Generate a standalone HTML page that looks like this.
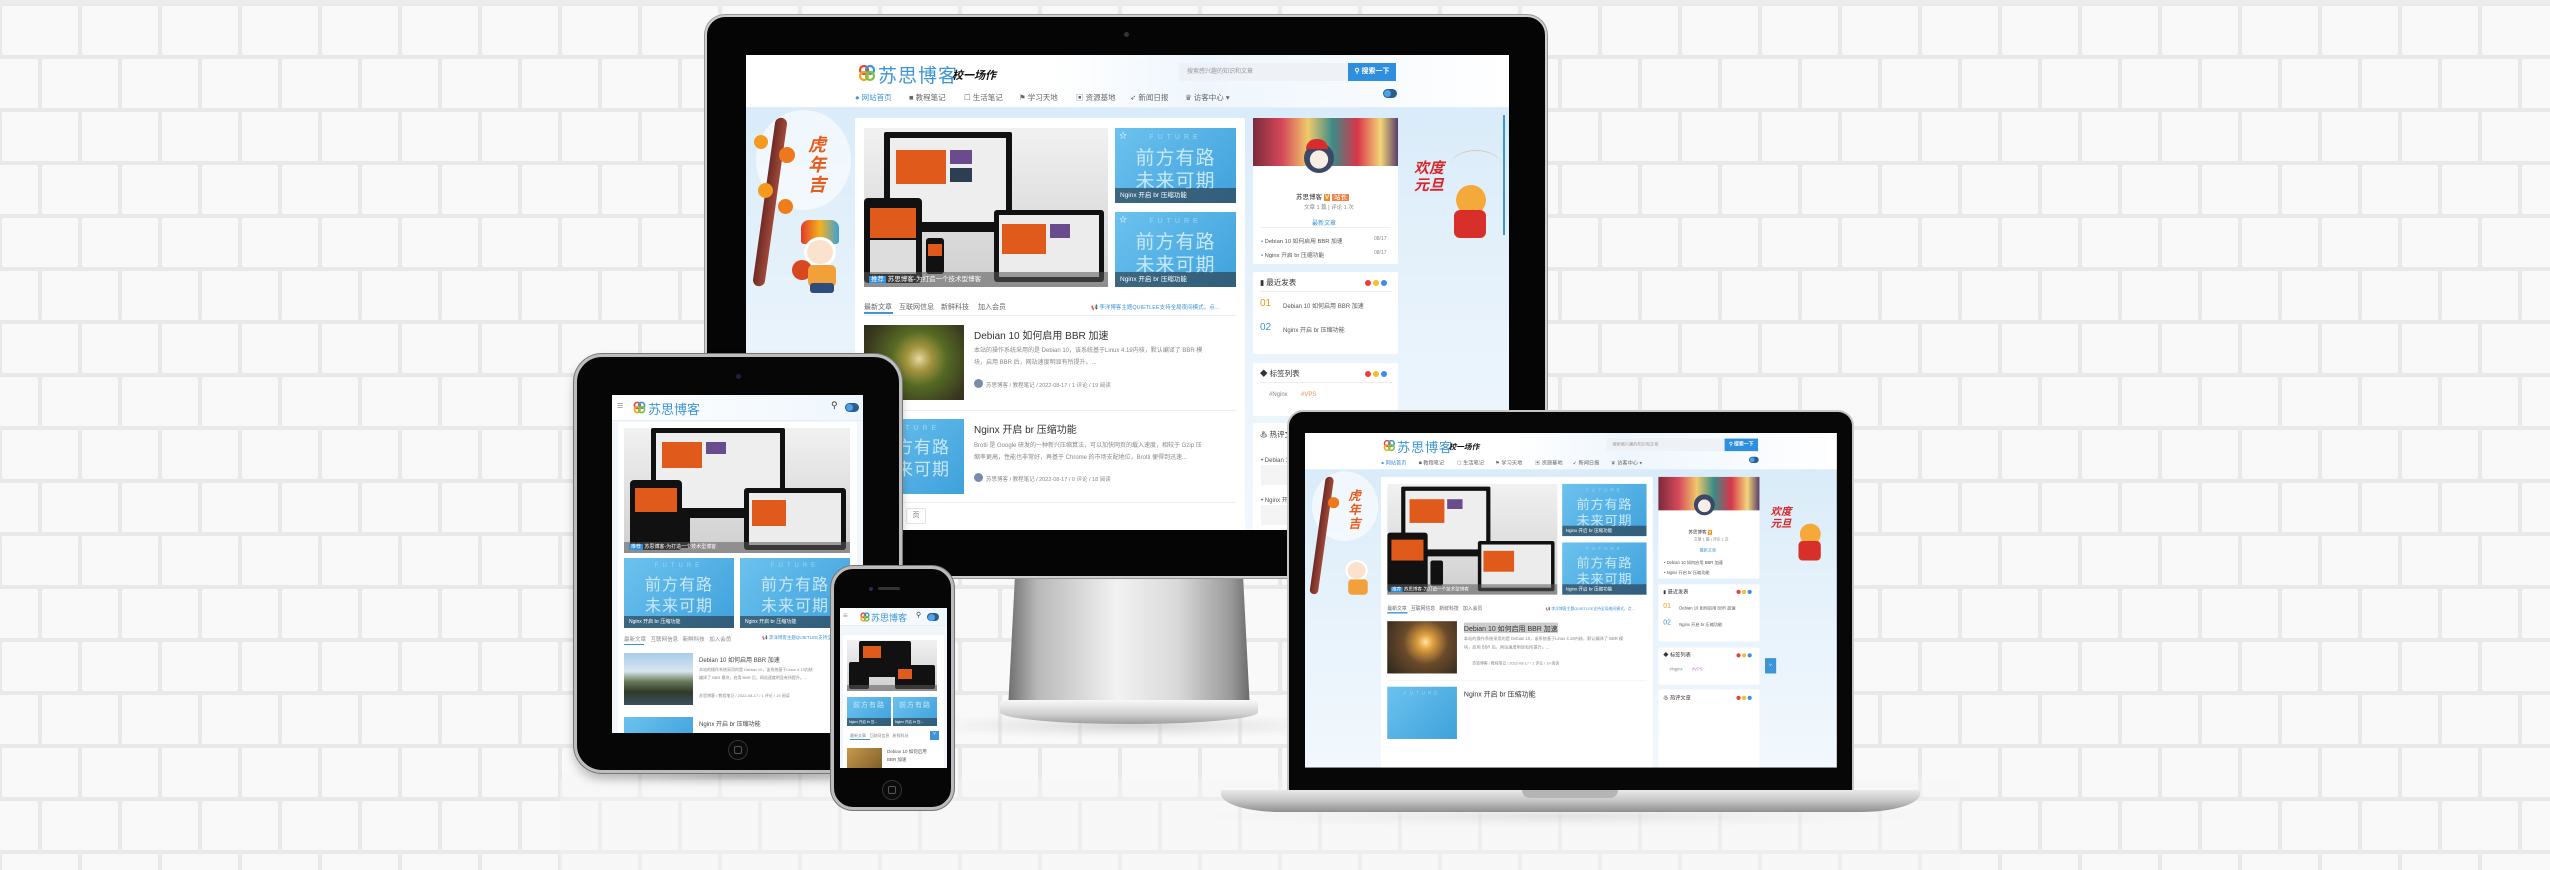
<!DOCTYPE html>
<html><head><meta charset="utf-8">
<style>
*{margin:0;padding:0;box-sizing:border-box}
body{width:2550px;height:870px;overflow:hidden;background:#ececec;font-family:"Liberation Sans","Noto Sans CJK SC",sans-serif;position:relative}
.abs{position:absolute}
.site{position:absolute;left:0;top:0;width:763px;height:480px;overflow:hidden;background:linear-gradient(180deg,#d6eaf8 0%,#e6f2fb 50%,#f2f8fd 100%)}
.site *{position:absolute;white-space:nowrap}
.hdr{left:0;top:0;width:763px;height:53px;background:linear-gradient(90deg,#fff 0%,#fff 40%,#eef6fd 60%,#fff 100%);border-bottom:1px solid #e3eef8}
.lt{font-size:19px;color:#3d95d6;letter-spacing:1px}
.sl{font-size:11px;color:#111;font-weight:bold;font-style:italic}
.srch{background:#eef2f6;color:#999;font-size:6px;line-height:18px;padding-left:8px}
.sbtn{background:#2e8fde;color:#fff;font-size:7px;line-height:18px;text-align:center;font-weight:bold}
.nv{font-size:7.5px;color:#666;top:37px}
.tog{width:14px;height:9px;border-radius:5px;background:#2d5d8e}
.tog::after{content:"";position:absolute;left:1px;top:1px;width:7px;height:7px;border-radius:50%;background:#4fa2e8}
.card{background:#fff;border-radius:2px}
.slide{background:linear-gradient(180deg,#f1f1f1,#cfcfcf);overflow:hidden}
.blue{background:linear-gradient(135deg,#6cc2ee,#3fa1dc);overflow:hidden}
.blue .f{left:0;right:0;top:6px;text-align:center;color:#9fd6f4;font-size:7px;letter-spacing:4px}
.blue .c{left:0;right:0;text-align:center;color:#c8e8fa;font-size:19px;letter-spacing:1px}
.cap{left:0;right:0;bottom:0;height:15px;background:rgba(40,50,60,.6);color:#fff;font-size:6.5px;line-height:15px;padding-left:5px}
.gt{color:#888;font-size:6px}
.tt{color:#333;font-size:10px}
.dots{width:24px;height:6px}
.dots i{position:absolute;top:0;width:6px;height:6px;border-radius:50%}
.mon{background:#111;border-radius:2px}
.org{background:#e05a1c}
</style></head><body>

<!-- brick background -->
<svg class="abs" style="left:0;top:0" width="2550" height="870">
<defs><pattern id="br" width="80" height="106" patternUnits="userSpaceOnUse">
<rect width="80" height="106" fill="#e9e9e9"/>
<rect x="2" y="2" width="76" height="49" rx="2" fill="#f9f9f9"/>
<rect x="-38" y="55" width="76" height="49" rx="2" fill="#f9f9f9"/>
<rect x="42" y="55" width="76" height="49" rx="2" fill="#f9f9f9"/>
</pattern>
<radialGradient id="sh"><stop offset="0" stop-color="#bbb" stop-opacity=".6"/><stop offset="1" stop-color="#ddd" stop-opacity="0"/></radialGradient>
</defs>
<rect width="2550" height="870" fill="url(#br)" transform="translate(0,4)"/>
<ellipse cx="1130" cy="726" rx="230" ry="14" fill="url(#sh)"/>
<ellipse cx="1560" cy="816" rx="360" ry="12" fill="url(#sh)"/>
<ellipse cx="740" cy="776" rx="190" ry="12" fill="url(#sh)"/>
<rect x="560" y="780" width="1400" height="90" fill="#f4f4f4" opacity=".45"/>
</svg>

<!-- iMac stand -->
<div class="abs" style="left:1008px;top:570px;width:242px;height:140px;background:linear-gradient(90deg,#6f6f6f 0%,#b8b8b8 12%,#f2f2f2 45%,#d9d9d9 70%,#9a9a9a 92%,#6a6a6a 100%);clip-path:polygon(3% 0,97% 0,100% 100%,0 100%)"></div>
<div class="abs" style="left:1000px;top:700px;width:258px;height:24px;border-radius:4px 4px 50% 50%;background:linear-gradient(180deg,#f8f8f8,#cfcfcf 60%,#9f9f9f)"></div>

<!-- iMac body -->
<div class="abs" style="left:705px;top:15px;width:842px;height:563px;background:#050505;border-radius:20px 20px 4px 4px;border:2px solid #cfcfcf;box-shadow:0 0 0 1px #999"></div>
<div class="abs" style="left:1124px;top:32px;width:5px;height:5px;border-radius:50%;background:#333"></div>

<!-- iMac screen -->
<div class="abs" style="left:746px;top:55px;width:763px;height:475px;overflow:hidden">
<div class="site">
 <div class="hdr">
  <svg style="left:112px;top:9px" width="18" height="18" viewBox="0 0 18 18" fill="none" stroke-width="2.2"><circle cx="6" cy="6" r="4" stroke="#e7473c"/><circle cx="12" cy="6" r="4" stroke="#3d95d6"/><circle cx="6" cy="12" r="4" stroke="#f2a51a"/><circle cx="12" cy="12" r="4" stroke="#7cc242"/></svg>
  <span class="lt" style="left:132px;top:6px">苏思博客</span>
  <span class="sl" style="left:206px;top:12px">校一场作</span>
  <div class="srch" style="left:433px;top:8px;width:169px;height:18px">搜索感兴趣的知识和文章</div>
  <div class="sbtn" style="left:602px;top:8px;width:48px;height:18px">⚲ 搜索一下</div>
  <span class="nv" style="left:109px;color:#3d95d6">● 网站首页</span>
  <span class="nv" style="left:163px">■ 教程笔记</span>
  <span class="nv" style="left:218px">☐ 生活笔记</span>
  <span class="nv" style="left:273px">⚑ 学习天地</span>
  <span class="nv" style="left:330px">▣ 资源基地</span>
  <span class="nv" style="left:384px">➶ 新闻日报</span>
  <span class="nv" style="left:439px">♛ 访客中心 ▾</span>
  <div class="tog" style="left:637px;top:34px"></div>
 </div>
 <!-- left deco -->
 <div style="left:10px;top:55px;width:95px;height:100px;border-radius:50%;background:#fff;opacity:.6"></div>
 <div style="left:18px;top:62px;width:12px;height:170px;background:linear-gradient(90deg,#6e2a24,#a04a3a);transform:rotate(8deg);border-radius:6px"></div>
 <div style="left:8px;top:80px;width:14px;height:14px;border-radius:50%;background:#f59a1f"></div>
 <div style="left:33px;top:92px;width:16px;height:16px;border-radius:50%;background:#f0781c"></div>
 <div style="left:12px;top:128px;width:15px;height:15px;border-radius:50%;background:#f59a1f"></div>
 <div style="left:32px;top:144px;width:15px;height:15px;border-radius:50%;background:#ef7d1a"></div>
 <div style="left:62px;top:20px;width:30px;font-size:18px;line-height:20px;color:#e85d1c;white-space:normal;top:80px;font-weight:bold;font-style:italic">虎年吉</div>
 <div style="left:55px;top:165px;width:38px;height:24px;border-radius:8px 8px 3px 3px;background:linear-gradient(90deg,#e23a2a,#f3b31e,#3aa0d8)"></div>
 <div style="left:58px;top:182px;width:32px;height:30px;border-radius:50%;background:#fbe2cf;border:3px solid #fff"></div>
 <div style="left:46px;top:205px;width:20px;height:20px;border-radius:50%;background:#d8471d"></div>
 <div style="left:62px;top:210px;width:28px;height:22px;background:#f2a03a;border-radius:5px"></div>
 <div style="left:64px;top:228px;width:24px;height:10px;background:#2e4d7a;border-radius:3px"></div>
 <!-- right deco -->
 <div style="left:668px;top:105px;width:40px;font-size:15px;line-height:17px;color:#d8262a;white-space:normal;font-weight:bold;font-style:italic">欢度元旦</div>
 <div style="left:710px;top:130px;width:30px;height:30px;border-radius:50%;background:#f4a93a"></div>
 <div style="left:708px;top:155px;width:32px;height:28px;border-radius:6px;background:#d92f2a"></div>
 <div style="left:705px;top:95px;width:50px;height:30px;border-top:1px solid #e4b2a5;border-radius:50%;opacity:.7"></div>
 <!-- main card -->
 <div class="card" style="left:109px;top:63px;width:390px;height:420px"></div>
 <div class="slide" style="left:118px;top:73px;width:244px;height:159px">
   <div class="mon" style="left:20px;top:4px;width:128px;height:100px"></div>
   <div style="left:26px;top:10px;width:116px;height:84px;background:#eee"></div>
   <div class="org" style="left:32px;top:22px;width:50px;height:34px"></div>
   <div style="left:86px;top:22px;width:22px;height:14px;background:#6a4b8c"></div>
   <div style="left:86px;top:40px;width:22px;height:14px;background:#2c3e52"></div>
   <div class="mon" style="left:0px;top:70px;width:58px;height:85px;border-radius:4px"></div>
   <div class="org" style="left:6px;top:80px;width:46px;height:30px"></div>
   <div style="left:6px;top:112px;width:46px;height:34px;background:#ddd"></div>
   <div class="mon" style="left:130px;top:82px;width:110px;height:72px;border-radius:3px"></div>
   <div style="left:135px;top:87px;width:100px;height:62px;background:#ececec"></div>
   <div class="org" style="left:138px;top:96px;width:44px;height:30px"></div>
   <div style="left:186px;top:96px;width:20px;height:14px;background:#6a4b8c"></div>
   <div class="mon" style="left:62px;top:110px;width:18px;height:36px;border-radius:3px"></div>
   <div class="org" style="left:64px;top:116px;width:14px;height:12px"></div>
   <div class="cap" style="background:rgba(90,90,90,.55)"><b style="position:relative;background:#2e8fde;padding:0 2px;font-weight:normal">推荐</b> 苏思博客-为打造一个技术型博客</div>
 </div>
 <div class="blue" style="left:369px;top:73px;width:121px;height:75px"><span style="left:4px;top:2px;color:#fff;font-size:8px">☆</span><span class="f">FUTURE</span><span class="c" style="top:15px">前方有路</span><span class="c" style="top:38px">未来可期</span><div class="cap">Nginx 开启 br 压缩功能</div></div>
 <div class="blue" style="left:369px;top:157px;width:121px;height:75px"><span style="left:4px;top:2px;color:#fff;font-size:8px">☆</span><span class="f">FUTURE</span><span class="c" style="top:15px">前方有路</span><span class="c" style="top:38px">未来可期</span><div class="cap">Nginx 开启 br 压缩功能</div></div>
 <span class="gt" style="left:118px;top:247px;font-size:7px;color:#666">最新文章</span>
 <div style="left:118px;top:257px;width:29px;height:1.5px;background:#3d95d6"></div>
 <span class="gt" style="left:153px;top:247px;font-size:7px;color:#666">互联网信息</span>
 <span class="gt" style="left:195px;top:247px;font-size:7px;color:#666">新鲜科技</span>
 <span class="gt" style="left:232px;top:247px;font-size:7px;color:#666">加入会员</span>
 <span style="left:345px;top:248px;font-size:5.5px;color:#3d95d6">📢 李洋博客主题QUIETLEE支持全局夜间模式，点...</span>
 <div style="left:118px;top:260px;width:372px;height:1px;background:#eee"></div>
 <div style="left:118px;top:270px;width:100px;height:75px;background:radial-gradient(circle at 55% 45%,#e6d9a0 0,#a3943e 18%,#556a24 40%,#3a3a1e 75%,#2a2a20 100%)"></div>
 <span class="tt" style="left:228px;top:272px">Debian 10 如何启用 BBR 加速</span>
 <span class="gt" style="left:228px;top:290px">本站的操作系统采用的是 Debian 10，该系统基于Linux 4.19内核，默认编译了 BBR 模</span>
 <span class="gt" style="left:228px;top:302px">块，启用 BBR 后，网站速度明显有所提升。...</span>
 <div style="left:228px;top:324px;width:9px;height:9px;border-radius:50%;background:#7a8da8"></div>
 <span class="gt" style="left:240px;top:326px;font-size:5.5px">苏思博客 / 教程笔记 / 2022-08-17 / 1 评论 / 19 阅读</span>
 <div style="left:118px;top:355px;width:372px;height:1px;background:#eee"></div>
 <div class="blue" style="left:118px;top:364px;width:100px;height:75px"><span class="f">FUTURE</span><span class="c" style="top:14px;font-size:17px">前方有路</span><span class="c" style="top:36px;font-size:17px">未来可期</span></div>
 <span class="tt" style="left:228px;top:366px">Nginx 开启 br 压缩功能</span>
 <span class="gt" style="left:228px;top:385px">Brotli 是 Google 研发的一种新兴压缩算法，可以加快网页的载入速度，相较于 Gzip 压</span>
 <span class="gt" style="left:228px;top:397px">缩率更高，性能也非常好，再基于 Chrome 的市场支配地位，Brotli 便得到迅速...</span>
 <div style="left:228px;top:418px;width:9px;height:9px;border-radius:50%;background:#7a8da8"></div>
 <span class="gt" style="left:240px;top:420px;font-size:5.5px">苏思博客 / 教程笔记 / 2022-08-17 / 0 评论 / 18 阅读</span>
 <div style="left:118px;top:447px;width:372px;height:1px;background:#eee"></div>
 <div style="left:160px;top:453px;width:20px;height:16px;border:1px solid #e3e3e3;border-radius:2px;font-size:7px;color:#777;text-align:center;line-height:14px">页</div>
 <!-- sidebar -->
 <div class="card" style="left:507px;top:63px;width:145px;height:146px"></div>
 <div style="left:507px;top:63px;width:145px;height:48px;background:linear-gradient(90deg,#7a2b3b,#d6485a 20%,#f0c96b 38%,#3b8b86 55%,#d8354a 72%,#f3d678 88%,#5a3d6a)"></div>
 <div style="left:558px;top:88px;width:30px;height:30px;border-radius:50%;background:radial-gradient(circle at 50% 55%,#f8ede4 40%,#3b4866 42%)"></div>
 <div style="left:560px;top:84px;width:22px;height:10px;border-radius:10px 10px 0 0;background:#d92b2b"></div>
 <span style="left:550px;top:136px;font-size:6.5px;color:#333">苏思博客 <b style="position:relative;background:#f28a1e;color:#fff;padding:0 1px">V</b> <b style="position:relative;background:#f0824a;color:#fff;padding:0 2px;font-weight:normal">站长</b></span>
 <span class="gt" style="left:558px;top:148px;font-size:5.5px">文章 1 篇 | 评论 1 次</span>
 <span style="left:566px;top:163px;font-size:6px;color:#3d95d6">最新文章</span>
 <div style="left:515px;top:172px;width:129px;height:1px;background:#eee"></div>
 <span class="gt" style="left:515px;top:181px;color:#555;font-size:5.8px"><b style="position:relative;color:#3d95d6">•</b> Debian 10 如何启用 BBR 加速</span><span class="gt" style="left:628px;top:181px;font-size:5px">08/17</span>
 <span class="gt" style="left:515px;top:195px;color:#555;font-size:5.8px"><b style="position:relative;color:#3d95d6">•</b> Nginx 开启 br 压缩功能</span><span class="gt" style="left:628px;top:195px;font-size:5px">08/17</span>

 <div class="card" style="left:507px;top:217px;width:145px;height:82px"></div>
 <span style="left:514px;top:222px;font-size:7.5px;color:#333">▮ 最近发表</span>
 <div class="dots" style="left:619px;top:225px"><i style="left:0;background:#f03c3c"></i><i style="left:8px;background:#f5c026"></i><i style="left:16px;background:#3f8ce8"></i></div>
 <div style="left:514px;top:236px;width:132px;height:1px;background:#eee"></div>
 <span style="left:514px;top:243px;font-size:10px;color:#f2960e">01</span><span class="gt" style="left:537px;top:246px;color:#555">Debian 10 如何启用 BBR 加速</span>
 <span style="left:514px;top:267px;font-size:10px;color:#3d95d6">02</span><span class="gt" style="left:537px;top:270px;color:#555">Nginx 开启 br 压缩功能</span>

 <div class="card" style="left:507px;top:308px;width:145px;height:53px"></div>
 <span style="left:514px;top:313px;font-size:7.5px;color:#333">◆ 标签列表</span>
 <div class="dots" style="left:619px;top:316px"><i style="left:0;background:#f03c3c"></i><i style="left:8px;background:#f5c026"></i><i style="left:16px;background:#3f8ce8"></i></div>
 <div style="left:514px;top:327px;width:132px;height:1px;background:#eee"></div>
 <span class="gt" style="left:523px;top:337px">#Nginx</span><span class="gt" style="left:555px;top:337px;color:#f08a4a">#VPS</span>

 <div class="card" style="left:507px;top:368px;width:145px;height:120px"></div>
 <span style="left:514px;top:374px;font-size:7.5px;color:#333">♨ 热评文章</span>
 <span class="gt" style="left:515px;top:400px;color:#555">• Debian 10 如何启用 BBR 加速</span>
 <div style="left:515px;top:410px;width:128px;height:20px;background:#f4f4f4"></div>
 <span class="gt" style="left:515px;top:440px;color:#555">• Nginx 开启 br 压缩功能</span>
 <div style="left:515px;top:450px;width:128px;height:20px;background:#f4f4f4"></div>
 <div style="left:757px;top:60px;width:2px;height:120px;background:#3d95d6"></div>
</div>
</div>

<!-- Tablet -->
<div class="abs" style="left:574px;top:354px;width:328px;height:419px;background:#060606;border-radius:28px;border:3px solid #bdbdbd;box-shadow:0 0 0 1px #777,0 6px 10px rgba(0,0,0,.25)"></div>
<div class="abs" style="left:736px;top:374px;width:5px;height:5px;border-radius:50%;background:#1e2040"></div>
<div class="abs" style="left:728px;top:740px;width:20px;height:20px;border-radius:50%;border:1.5px solid #333;background:#0b0b0b"></div>
<div class="abs" style="left:734px;top:746px;width:8px;height:8px;border-radius:2px;border:1px solid #555"></div>
<div class="abs" style="left:612px;top:395px;width:251px;height:338px;overflow:hidden;background:#eef3f7">
 <div class="site" style="width:251px;height:338px;background:#f2f6fa">
  <div style="left:0;top:0;width:251px;height:26px;background:linear-gradient(90deg,#fff,#eef6fd);border-bottom:1px solid #e3eef8"></div>
  <span style="left:5px;top:5px;font-size:11px;color:#999">≡</span>
  <svg style="left:21px;top:6px" width="13" height="13" viewBox="0 0 18 18" fill="none" stroke-width="2.4"><circle cx="6" cy="6" r="4" stroke="#e7473c"/><circle cx="12" cy="6" r="4" stroke="#3d95d6"/><circle cx="6" cy="12" r="4" stroke="#f2a51a"/><circle cx="12" cy="12" r="4" stroke="#7cc242"/></svg>
  <span style="left:36px;top:4px;font-size:13px;color:#3d95d6">苏思博客</span>
  <span style="left:219px;top:5px;font-size:9px;color:#333">⚲</span>
  <div class="tog" style="left:233px;top:8px"></div>
  <div class="card" style="left:6px;top:27px;width:239px;height:320px"></div>
  <div class="slide" style="left:12px;top:33px;width:226px;height:125px">
   <div class="mon" style="left:27px;top:0;width:134px;height:90px"></div>
   <div style="left:32px;top:5px;width:124px;height:75px;background:#eee"></div>
   <div class="org" style="left:38px;top:14px;width:40px;height:26px"></div>
   <div style="left:82px;top:14px;width:20px;height:12px;background:#6a4b8c"></div>
   <div class="mon" style="left:6px;top:52px;width:52px;height:70px;border-radius:4px"></div>
   <div class="org" style="left:11px;top:60px;width:42px;height:24px"></div>
   <div class="mon" style="left:120px;top:60px;width:102px;height:62px;border-radius:3px"></div>
   <div style="left:125px;top:65px;width:92px;height:52px;background:#ececec"></div>
   <div class="org" style="left:128px;top:72px;width:34px;height:26px"></div>
   <div class="mon" style="left:48px;top:86px;width:18px;height:34px;border-radius:3px"></div>
   <div class="cap" style="height:11px;line-height:11px;font-size:5px;background:rgba(90,90,90,.55)"><b style="position:relative;background:#2e8fde;padding:0 2px;font-weight:normal">推荐</b> 苏思博客-为打造一个技术型博客</div>
  </div>
  <div class="blue" style="left:12px;top:163px;width:110px;height:70px"><span class="f" style="font-size:6px;top:5px">FUTURE</span><span class="c" style="top:13px;font-size:16px">前方有路</span><span class="c" style="top:34px;font-size:16px">未来可期</span><div class="cap" style="height:12px;line-height:12px;font-size:5px">Nginx 开启 br 压缩功能</div></div>
  <div class="blue" style="left:128px;top:163px;width:110px;height:70px"><span class="f" style="font-size:6px;top:5px">FUTURE</span><span class="c" style="top:13px;font-size:16px">前方有路</span><span class="c" style="top:34px;font-size:16px">未来可期</span><div class="cap" style="height:12px;line-height:12px;font-size:5px">Nginx 开启 br 压缩功能</div></div>
  <span class="gt" style="left:12px;top:240px;font-size:5.5px">最新文章 &nbsp; 互联网信息 &nbsp; 新鲜科技 &nbsp; 加入会员</span>
  <div style="left:12px;top:249px;width:20px;height:1px;background:#3d95d6"></div>
  <span style="left:150px;top:240px;font-size:4.5px;color:#3d95d6">📢 李洋博客主题QUIETLEE支持全局...</span>
  <div style="left:12px;top:258px;width:69px;height:52px;background:linear-gradient(180deg,#a8cbe8 0%,#d8e6f0 35%,#6a7a5a 55%,#2f3b2a 75%,#3a5060 100%)"></div>
  <span style="left:87px;top:260px;font-size:6px;color:#444">Debian 10 如何启用 BBR 加速</span>
  <span class="gt" style="left:87px;top:272px;font-size:4px">本站的操作系统采用的是 Debian 10，该系统基于Linux 4.19内核</span>
  <span class="gt" style="left:87px;top:280px;font-size:4px">编译了 BBR 模块，启用 BBR 后，网站速度明显有所提升。...</span>
  <span class="gt" style="left:87px;top:298px;font-size:4px">苏思博客 / 教程笔记 / 2022-08-17 / 1 评论 / 19 阅读</span>
  <div class="blue" style="left:12px;top:322px;width:69px;height:30px"></div>
  <span style="left:87px;top:324px;font-size:6px;color:#444">Nginx 开启 br 压缩功能</span>
 </div>
</div>

<!-- iMac continuation behind? no -->

<!-- Laptop -->
<div class="abs" style="left:1287px;top:410px;width:567px;height:384px;background:#070707;border-radius:16px 16px 0 0;border:2px solid #c7c7c7;border-bottom:none"></div>
<div class="abs" style="left:1221px;top:790px;width:699px;height:22px;border-radius:2px 2px 60px 60px/2px 2px 18px 18px;background:linear-gradient(180deg,#e9e9e9,#c9c9c9 45%,#8f8f8f)"></div>
<div class="abs" style="left:1522px;top:790px;width:96px;height:8px;border-radius:0 0 8px 8px;background:#b5b5b5"></div>
<div class="abs" style="left:1305px;top:433px;width:532px;height:335px;overflow:hidden">
<div style="position:absolute;left:0;top:0;width:763px;height:480px;transform:scale(0.697);transform-origin:0 0">
<div class="site">
 <div class="hdr">
  <svg style="left:112px;top:9px" width="18" height="18" viewBox="0 0 18 18" fill="none" stroke-width="2.2"><circle cx="6" cy="6" r="4" stroke="#e7473c"/><circle cx="12" cy="6" r="4" stroke="#3d95d6"/><circle cx="6" cy="12" r="4" stroke="#f2a51a"/><circle cx="12" cy="12" r="4" stroke="#7cc242"/></svg>
  <span class="lt" style="left:132px;top:6px">苏思博客</span>
  <span class="sl" style="left:206px;top:12px">校一场作</span>
  <div class="srch" style="left:433px;top:8px;width:169px;height:18px">搜索感兴趣的知识和文章</div>
  <div class="sbtn" style="left:602px;top:8px;width:48px;height:18px">⚲ 搜索一下</div>
  <span class="nv" style="left:109px;color:#3d95d6">● 网站首页</span>
  <span class="nv" style="left:163px">■ 教程笔记</span>
  <span class="nv" style="left:218px">☐ 生活笔记</span>
  <span class="nv" style="left:273px">⚑ 学习天地</span>
  <span class="nv" style="left:330px">▣ 资源基地</span>
  <span class="nv" style="left:384px">➶ 新闻日报</span>
  <span class="nv" style="left:439px">♛ 访客中心 ▾</span>
  <div class="tog" style="left:637px;top:34px"></div>
 </div>
 <div style="left:10px;top:55px;width:95px;height:100px;border-radius:50%;background:#fff;opacity:.6"></div>
 <div style="left:18px;top:62px;width:12px;height:170px;background:linear-gradient(90deg,#6e2a24,#a04a3a);transform:rotate(8deg);border-radius:6px"></div>
 <div style="left:33px;top:92px;width:16px;height:16px;border-radius:50%;background:#f0781c"></div>
 <div style="left:62px;width:30px;font-size:18px;line-height:20px;color:#e85d1c;white-space:normal;top:80px;font-weight:bold;font-style:italic">虎年吉</div>
 <div style="left:58px;top:182px;width:32px;height:30px;border-radius:50%;background:#fbe2cf;border:3px solid #fff"></div>
 <div style="left:62px;top:210px;width:28px;height:22px;background:#f2a03a;border-radius:5px"></div>
 <div style="left:668px;top:105px;width:40px;font-size:15px;line-height:17px;color:#d8262a;white-space:normal;font-weight:bold;font-style:italic">欢度元旦</div>
 <div style="left:710px;top:130px;width:30px;height:30px;border-radius:50%;background:#f4a93a"></div>
 <div style="left:708px;top:155px;width:32px;height:28px;border-radius:6px;background:#d92f2a"></div>
 <div class="card" style="left:109px;top:63px;width:390px;height:420px"></div>
 <div class="slide" style="left:118px;top:73px;width:244px;height:159px">
   <div class="mon" style="left:20px;top:4px;width:128px;height:100px"></div>
   <div style="left:26px;top:10px;width:116px;height:84px;background:#eee"></div>
   <div class="org" style="left:32px;top:22px;width:50px;height:34px"></div>
   <div style="left:86px;top:22px;width:22px;height:14px;background:#6a4b8c"></div>
   <div class="mon" style="left:0px;top:70px;width:58px;height:85px;border-radius:4px"></div>
   <div class="org" style="left:6px;top:80px;width:46px;height:30px"></div>
   <div class="mon" style="left:130px;top:82px;width:110px;height:72px;border-radius:3px"></div>
   <div style="left:135px;top:87px;width:100px;height:62px;background:#ececec"></div>
   <div class="org" style="left:138px;top:96px;width:44px;height:30px"></div>
   <div class="mon" style="left:62px;top:110px;width:18px;height:36px;border-radius:3px"></div>
   <div class="cap" style="background:rgba(90,90,90,.55)"><b style="position:relative;background:#2e8fde;padding:0 2px;font-weight:normal">推荐</b> 苏思博客-为打造一个技术型博客</div>
 </div>
 <div class="blue" style="left:369px;top:73px;width:121px;height:75px"><span class="f">FUTURE</span><span class="c" style="top:15px">前方有路</span><span class="c" style="top:38px">未来可期</span><div class="cap">Nginx 开启 br 压缩功能</div></div>
 <div class="blue" style="left:369px;top:157px;width:121px;height:75px"><span class="f">FUTURE</span><span class="c" style="top:15px">前方有路</span><span class="c" style="top:38px">未来可期</span><div class="cap">Nginx 开启 br 压缩功能</div></div>
 <span class="gt" style="left:118px;top:247px;font-size:7px;color:#666">最新文章 &nbsp; 互联网信息 &nbsp; 新鲜科技 &nbsp; 加入会员</span>
 <div style="left:118px;top:257px;width:29px;height:1.5px;background:#3d95d6"></div>
 <span style="left:345px;top:248px;font-size:5.5px;color:#3d95d6">📢 李洋博客主题QUIETLEE支持全局夜间模式，点...</span>
 <div style="left:118px;top:270px;width:100px;height:75px;background:radial-gradient(circle at 55% 40%,#ffe6a0 0,#e0a040 15%,#6a4a2a 45%,#2a2520 100%)"></div>
 <span class="tt" style="left:228px;top:272px;background:#ccc">Debian 10 如何启用 BBR 加速</span>
 <span class="gt" style="left:228px;top:290px">本站的操作系统采用的是 Debian 10，该系统基于Linux 4.19内核，默认编译了 BBR 模</span>
 <span class="gt" style="left:228px;top:302px">块，启用 BBR 后，网站速度明显有所提升。...</span>
 <span class="gt" style="left:240px;top:326px;font-size:5.5px">苏思博客 / 教程笔记 / 2022-08-17 / 1 评论 / 19 阅读</span>
 <div style="left:118px;top:355px;width:372px;height:1px;background:#eee"></div>
 <div class="blue" style="left:118px;top:364px;width:100px;height:75px"><span class="f">FUTURE</span></div>
 <span class="tt" style="left:228px;top:366px">Nginx 开启 br 压缩功能</span>
 <div class="card" style="left:507px;top:63px;width:145px;height:146px"></div>
 <div style="left:507px;top:63px;width:145px;height:48px;background:linear-gradient(90deg,#7a2b3b,#d6485a 20%,#f0c96b 38%,#3b8b86 55%,#d8354a 72%,#f3d678 88%,#5a3d6a)"></div>
 <div style="left:558px;top:88px;width:30px;height:30px;border-radius:50%;background:radial-gradient(circle at 50% 55%,#f8ede4 40%,#3b4866 42%)"></div>
 <span style="left:550px;top:136px;font-size:6.5px;color:#333">苏思博客 <b style="position:relative;background:#f28a1e;color:#fff;padding:0 1px">V</b></span>
 <span class="gt" style="left:558px;top:148px;font-size:5.5px">文章 1 篇 | 评论 1 次</span>
 <span style="left:566px;top:163px;font-size:6px;color:#3d95d6">最新文章</span>
 <span class="gt" style="left:515px;top:181px;color:#555">• Debian 10 如何启用 BBR 加速</span>
 <span class="gt" style="left:515px;top:195px;color:#555">• Nginx 开启 br 压缩功能</span>
 <div class="card" style="left:507px;top:217px;width:145px;height:82px"></div>
 <span style="left:514px;top:222px;font-size:7.5px;color:#333">▮ 最近发表</span>
 <div class="dots" style="left:619px;top:225px"><i style="left:0;background:#f03c3c"></i><i style="left:8px;background:#f5c026"></i><i style="left:16px;background:#3f8ce8"></i></div>
 <span style="left:514px;top:243px;font-size:10px;color:#f2960e">01</span><span class="gt" style="left:537px;top:246px;color:#555">Debian 10 如何启用 BBR 加速</span>
 <span style="left:514px;top:267px;font-size:10px;color:#3d95d6">02</span><span class="gt" style="left:537px;top:270px;color:#555">Nginx 开启 br 压缩功能</span>
 <div class="card" style="left:507px;top:308px;width:145px;height:53px"></div>
 <span style="left:514px;top:313px;font-size:7.5px;color:#333">◆ 标签列表</span>
 <div class="dots" style="left:619px;top:316px"><i style="left:0;background:#f03c3c"></i><i style="left:8px;background:#f5c026"></i><i style="left:16px;background:#3f8ce8"></i></div>
 <span class="gt" style="left:523px;top:337px">#Nginx</span><span class="gt" style="left:555px;top:337px;color:#c070f0">#VPS</span>
 <div class="card" style="left:507px;top:368px;width:145px;height:120px"></div>
 <span style="left:514px;top:374px;font-size:7.5px;color:#333">♨ 热评文章</span>
 <div class="dots" style="left:619px;top:377px"><i style="left:0;background:#f03c3c"></i><i style="left:8px;background:#f5c026"></i><i style="left:16px;background:#3f8ce8"></i></div>
 <div style="left:660px;top:323px;width:16px;height:22px;background:#3d95d6;color:#fff;font-size:7px;text-align:center;line-height:22px">˅</div>
</div>
</div>
</div>

<!-- Phone -->
<div class="abs" style="left:831px;top:566px;width:123px;height:244px;background:#060606;border-radius:22px;border:3px solid #bcbcbc;box-shadow:0 0 0 1px #777"></div>
<div class="abs" style="left:878px;top:587px;width:22px;height:3px;border-radius:2px;background:#333"></div>
<div class="abs" style="left:869px;top:587px;width:4px;height:4px;border-radius:50%;background:#2a2a50"></div>
<div class="abs" style="left:882px;top:780px;width:20px;height:20px;border-radius:50%;border:1.5px solid #333;background:#0b0b0b"></div>
<div class="abs" style="left:888px;top:786px;width:8px;height:8px;border-radius:2px;border:1px solid #555"></div>
<div class="abs" style="left:840px;top:608px;width:107px;height:160px;overflow:hidden">
 <div class="site" style="width:107px;height:160px;background:#f2f6fa">
  <div style="left:0;top:0;width:107px;height:18px;background:linear-gradient(90deg,#fff,#eef6fd);border-bottom:1px solid #e3eef8"></div>
  <span style="left:3px;top:3px;font-size:8px;color:#999">≡</span>
  <svg style="left:20px;top:4px" width="10" height="10" viewBox="0 0 18 18" fill="none" stroke-width="2.6"><circle cx="6" cy="6" r="4" stroke="#e7473c"/><circle cx="12" cy="6" r="4" stroke="#3d95d6"/><circle cx="6" cy="12" r="4" stroke="#f2a51a"/><circle cx="12" cy="12" r="4" stroke="#7cc242"/></svg>
  <span style="left:31px;top:3px;font-size:9px;color:#3d95d6">苏思博客</span>
  <span style="left:76px;top:3px;font-size:7px;color:#333">⚲</span>
  <div class="tog" style="left:87px;top:5px;width:12px;height:8px"></div>
  <div class="card" style="left:3px;top:27px;width:101px;height:140px"></div>
  <div class="slide" style="left:7px;top:32px;width:90px;height:51px">
   <div class="mon" style="left:12px;top:1px;width:52px;height:36px"></div>
   <div class="org" style="left:16px;top:6px;width:18px;height:12px"></div>
   <div class="mon" style="left:2px;top:22px;width:20px;height:27px"></div>
   <div class="mon" style="left:48px;top:25px;width:40px;height:24px"></div>
   <div class="org" style="left:51px;top:29px;width:14px;height:10px"></div>
   <div class="cap" style="height:6px;background:rgba(90,90,90,.55)"></div>
  </div>
  <div class="blue" style="left:7px;top:89px;width:44px;height:29px"><span class="c" style="top:3px;font-size:7px">前方有路</span><div class="cap" style="height:8px;line-height:8px;font-size:3.5px;padding-left:2px">Nginx 开启 br 压...</div></div>
  <div class="blue" style="left:53px;top:89px;width:44px;height:29px"><span class="c" style="top:3px;font-size:7px">前方有路</span><div class="cap" style="height:8px;line-height:8px;font-size:3.5px;padding-left:2px">Nginx 开启 br 压...</div></div>
  <span class="gt" style="left:10px;top:125px;font-size:4px">最新文章 &nbsp; 互联网信息 &nbsp; 新鲜科技</span>
  <div style="left:10px;top:131px;width:20px;height:1px;background:#3d95d6"></div>
  <div style="left:90px;top:123px;width:9px;height:9px;background:#3d95d6;color:#fff;font-size:5px;text-align:center">˅</div>
  <div style="left:7px;top:140px;width:35px;height:25px;background:linear-gradient(135deg,#c89a4a,#7a5a2a)"></div>
  <span style="left:47px;top:141px;font-size:4.5px;color:#555">Debian 10 如何启用</span>
  <span style="left:47px;top:149px;font-size:4.5px;color:#555">BBR 加速</span>
 </div>
</div>
</body></html>
